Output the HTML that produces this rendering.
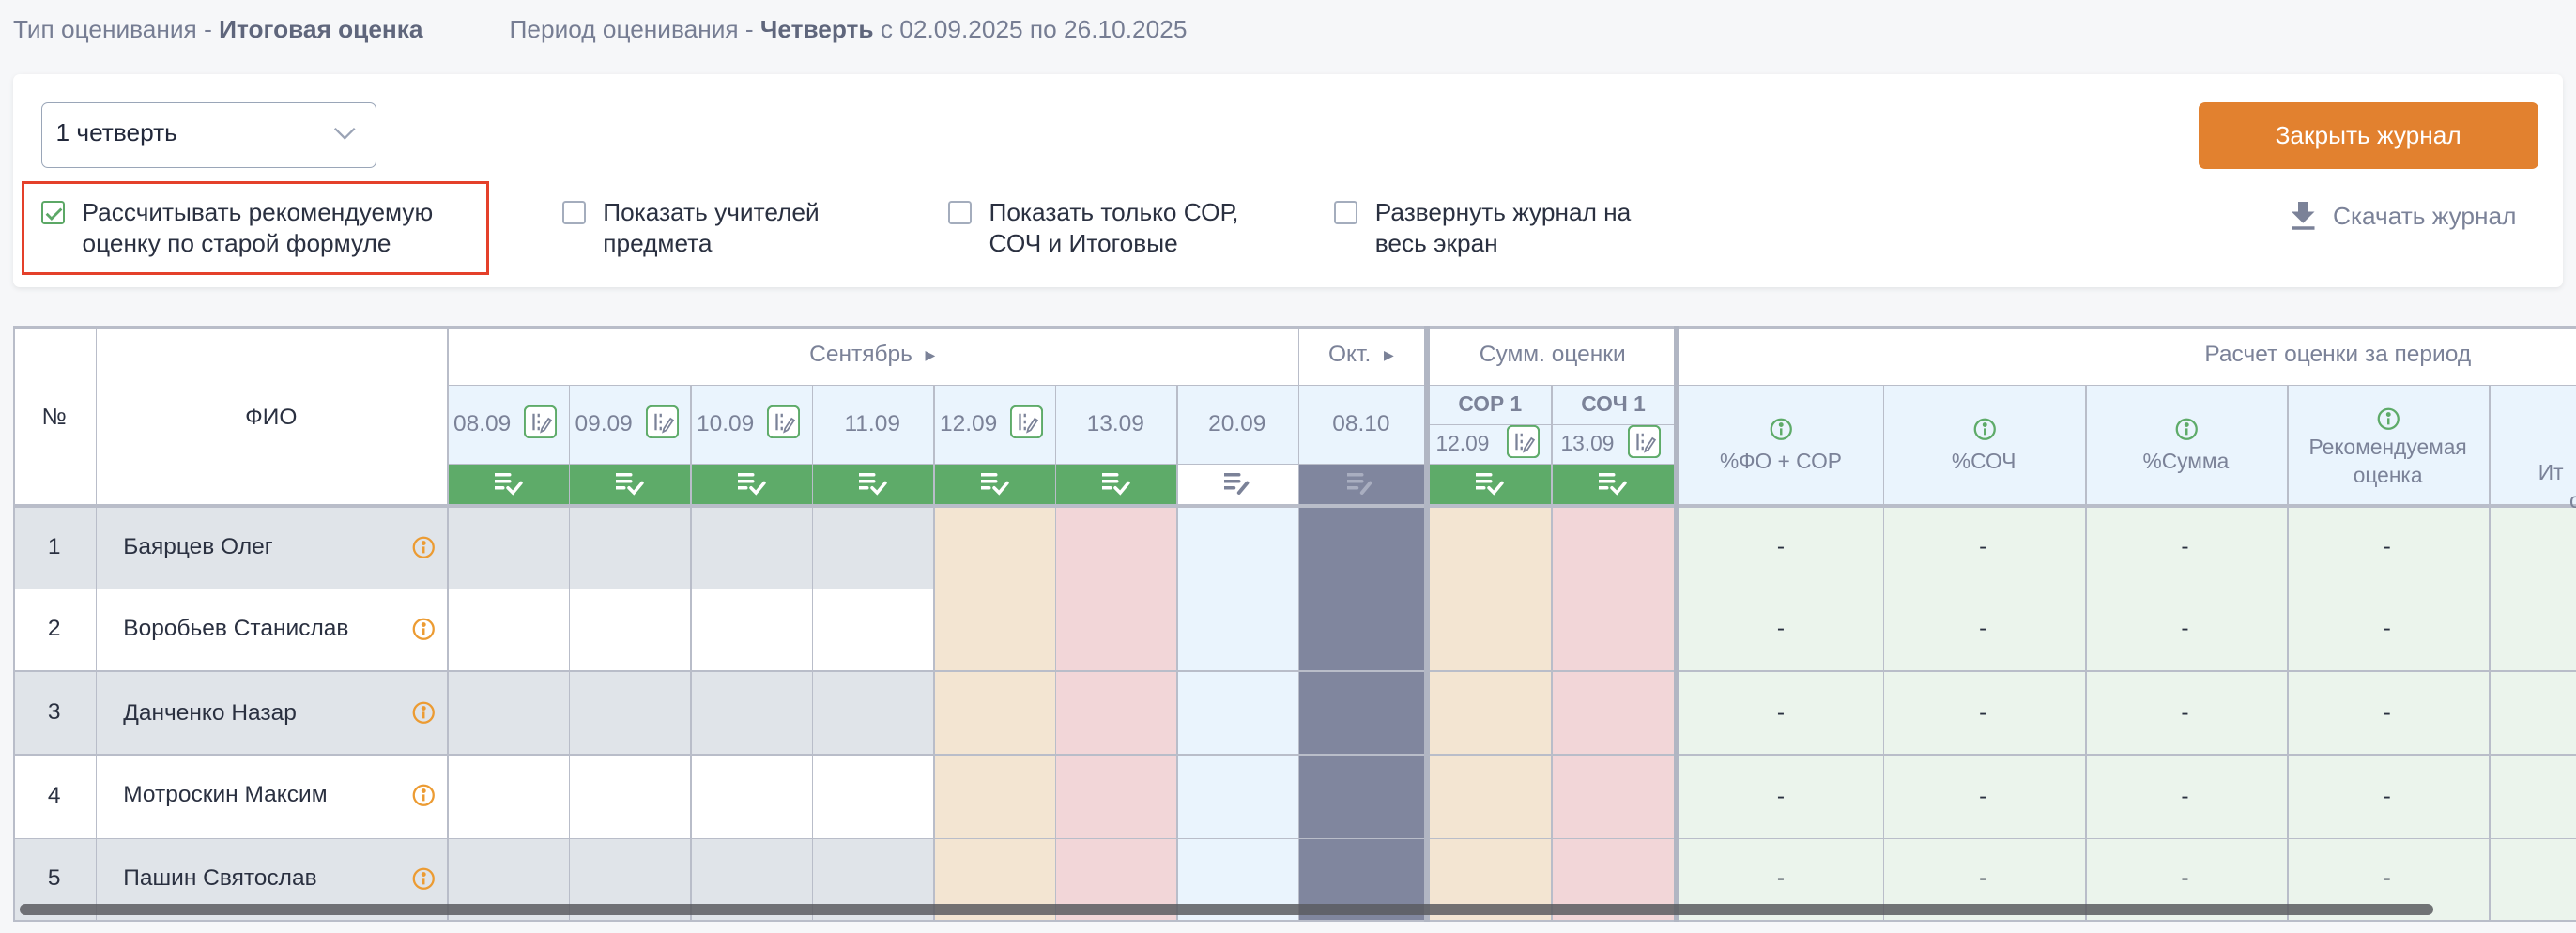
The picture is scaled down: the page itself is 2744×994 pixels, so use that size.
<!DOCTYPE html>
<html><head><meta charset="utf-8"><style>
html,body{margin:0;padding:0;background:#f6f7f9;overflow:hidden}
#w{position:relative;width:1568px;height:568px;zoom:1.75;font-family:"Liberation Sans",sans-serif;color:#2a3040}
.a{position:absolute}
.t{position:absolute;display:flex;align-items:center;justify-content:center;text-align:center}
.vl{position:absolute;width:1px;background:#b9bdc9}
.hl{position:absolute;height:1px;background:#b9bdc9}
.g{color:#7b8298}
.cb{position:absolute;width:12px;height:12px;border:1.5px solid #a4adbd;border-radius:2px;background:#fff}
.lab{position:absolute;font-size:15px;line-height:19px;color:#2a3040}
.ic{position:absolute}
.d{position:absolute;font-size:14px;width:20px;text-align:center}
</style></head><body><div id="w">
<div class="a" style="left:8px;top:9px;font-size:15px;color:#767d93">Тип оценивания - <b style="color:#5f667c">Итоговая оценка</b></div>
<div class="a" style="left:310px;top:9px;font-size:15px;color:#767d93">Период оценивания - <b style="color:#5f667c">Четверть</b> с 02.09.2025 по 26.10.2025</div>

<div class="a" style="left:8px;top:45px;width:1552px;height:130px;background:#fff;border-radius:4px;box-shadow:0 1px 3px rgba(0,0,0,.08)"></div>
<div class="a" style="left:25px;top:62px;width:203px;height:39px;border:1px solid #9aa6b8;border-radius:4px;background:#fff"></div>
<div class="a" style="left:34px;top:72px;font-size:15px;color:#22283a">1 четверть</div>
<svg class="ic" style="left:203px;top:77px" width="14" height="9"><path d="M1 1l6 6 6-6" stroke="#9aa3b5" stroke-width="1.3" fill="none"/></svg>
<div class="t" style="left:1338px;top:62px;width:207px;height:41px;background:#e2812f;border-radius:4px;color:#fff;font-size:15px">Закрыть журнал</div>
<svg class="ic" style="left:1395px;top:123px" width="14" height="17"><path d="M4 0h6v6h4l-7 7-7-7h4z" fill="#7b8298"/><rect x="0" y="15" width="14" height="2" fill="#7b8298"/></svg>
<div class="a" style="left:1420px;top:123px;font-size:15px;color:#7b8298">Скачать журнал</div>

<div class="a" style="left:13px;top:110px;width:281px;height:54px;border:2px solid #e4402a"></div>
<div class="cb" style="left:25px;top:122px;border-color:#5ca866"></div>
<svg class="ic" style="left:27px;top:125px" width="12" height="10"><path d="M1.5 5l3 3 6-6" stroke="#5ca866" stroke-width="1.6" fill="none"/></svg>
<div class="lab" style="left:50px;top:120px">Рассчитывать рекомендуемую<br>оценку по старой формуле</div>
<div class="cb" style="left:342px;top:122px"></div>
<div class="lab" style="left:367px;top:120px">Показать учителей<br>предмета</div>
<div class="cb" style="left:577px;top:122px"></div>
<div class="lab" style="left:602px;top:120px">Показать только СОР,<br>СОЧ и Итоговые</div>
<div class="cb" style="left:812px;top:122px"></div>
<div class="lab" style="left:837px;top:120px">Развернуть журнал на<br>весь экран</div>

<div class="a" style="left:8px;top:198px;width:1560px;height:362px;background:#fff"></div>
<div class="a" style="left:272px;top:234px;width:598px;height:48px;background:#eaf4fd"></div>
<div class="a" style="left:870px;top:234px;width:150px;height:48px;background:#eaf4fd"></div>
<div class="a" style="left:1022px;top:234px;width:546px;height:74px;background:#eaf4fd"></div>
<div class="a" style="left:272px;top:282px;width:444px;height:26px;background:#5eab69"></div>
<div class="a" style="left:790px;top:282px;width:77px;height:26px;background:#80869e"></div>
<div class="a" style="left:870px;top:282px;width:150px;height:26px;background:#5eab69"></div>
<div class="a" style="left:8px;top:308px;width:1560px;height:50px;background:#e0e4e9"></div>
<div class="a" style="left:8px;top:408px;width:1560px;height:51px;background:#e0e4e9"></div>
<div class="a" style="left:8px;top:510px;width:1560px;height:50px;background:#e0e4e9"></div>
<div class="a" style="left:568px;top:308px;width:74px;height:252px;background:#f3e5d2"></div>
<div class="a" style="left:642px;top:308px;width:74px;height:252px;background:#f2d6d8"></div>
<div class="a" style="left:716px;top:308px;width:74px;height:252px;background:#eaf4fd"></div>
<div class="a" style="left:790px;top:308px;width:77px;height:252px;background:#80869e"></div>
<div class="a" style="left:870px;top:308px;width:74px;height:252px;background:#f3e5d2"></div>
<div class="a" style="left:944px;top:308px;width:76px;height:252px;background:#f2d6d8"></div>
<div class="a" style="left:1022px;top:308px;width:546px;height:252px;background:#ebf4ec"></div>

<div class="hl" style="left:8px;top:198px;width:1560px;height:2px"></div>
<div class="hl" style="left:272px;top:234px;width:1296px"></div>
<div class="hl" style="left:870px;top:258px;width:150px"></div>
<div class="hl" style="left:272px;top:282px;width:748px"></div>
<div class="hl" style="left:8px;top:307px;width:1560px;height:2px"></div>
<div class="hl" style="left:8px;top:358px;width:1560px"></div>
<div class="hl" style="left:8px;top:408px;width:1560px"></div>
<div class="hl" style="left:8px;top:459px;width:1560px"></div>
<div class="hl" style="left:8px;top:510px;width:1560px"></div>
<div class="hl" style="left:8px;top:560px;width:1560px"></div>
<div class="vl" style="left:8px;top:198px;height:363px"></div>
<div class="vl" style="left:58px;top:198px;height:363px"></div>
<div class="vl" style="left:272px;top:198px;height:363px"></div>
<div class="vl" style="left:346px;top:234px;height:327px"></div>
<div class="vl" style="left:420px;top:234px;height:327px"></div>
<div class="vl" style="left:494px;top:234px;height:327px"></div>
<div class="vl" style="left:568px;top:234px;height:327px"></div>
<div class="vl" style="left:642px;top:234px;height:327px"></div>
<div class="vl" style="left:716px;top:234px;height:327px"></div>
<div class="vl" style="left:790px;top:198px;height:363px"></div>
<div class="vl" style="left:867px;top:198px;height:363px;width:3px;background:#b1b6c3"></div>
<div class="vl" style="left:944px;top:234px;height:327px"></div>
<div class="vl" style="left:1019px;top:198px;height:363px;width:3px;background:#b1b6c3"></div>
<div class="vl" style="left:1146px;top:234px;height:327px"></div>
<div class="vl" style="left:1269px;top:234px;height:327px"></div>
<div class="vl" style="left:1392px;top:234px;height:327px"></div>
<div class="vl" style="left:1515px;top:234px;height:327px"></div>

<div class="t" style="left:8px;top:234px;width:50px;height:40px;font-size:14px">№</div>
<div class="t" style="left:58px;top:234px;width:214px;height:40px;font-size:14px">ФИО</div>
<div class="t g" style="left:272px;top:198px;width:518px;height:36px;font-size:14px">Сентябрь &nbsp;<span style="font-size:8px">▶</span></div>
<div class="t g" style="left:790px;top:198px;width:77px;height:36px;font-size:14px">Окт. &nbsp;<span style="font-size:8px">▶</span></div>
<div class="t g" style="left:870px;top:198px;width:150px;height:36px;font-size:14px">Сумм. оценки</div>
<div class="t g" style="left:1022px;top:198px;width:802px;height:36px;font-size:14px">Расчет оценки за период</div>

<div class="a g" style="left:276px;top:250px;font-size:14px">08.09</div>
<div class="a g" style="left:350px;top:250px;font-size:14px">09.09</div>
<div class="a g" style="left:424px;top:250px;font-size:14px">10.09</div>
<div class="t g" style="left:494px;top:234px;width:74px;height:48px;font-size:14px">11.09</div>
<div class="a g" style="left:572px;top:250px;font-size:14px">12.09</div>
<div class="t g" style="left:642px;top:234px;width:74px;height:48px;font-size:14px">13.09</div>
<div class="t g" style="left:716px;top:234px;width:74px;height:48px;font-size:14px">20.09</div>
<div class="t g" style="left:790px;top:234px;width:77px;height:48px;font-size:14px">08.10</div>
<div class="t g" style="left:870px;top:234px;width:74px;height:24px;font-size:13px;font-weight:bold">СОР 1</div>
<div class="t g" style="left:944px;top:234px;width:76px;height:24px;font-size:13px;font-weight:bold">СОЧ 1</div>
<div class="a g" style="left:874px;top:262px;font-size:13px">12.09</div>
<div class="a g" style="left:950px;top:262px;font-size:13px">13.09</div>

<svg width="0" height="0" style="position:absolute"><defs>
<g id="db"><rect x="0.5" y="0.5" width="19" height="19" rx="3" fill="#fff" stroke="#5eab69" stroke-width="1.2"/><path d="M6 5v10M9 5v2M9 9v2M9 13v2" stroke="#7b8298" stroke-width="1.3"/><path d="M11 14l4-6 1.5 1-4 6-2 1z" stroke="#7b8298" stroke-width="1" fill="none"/></g>
<g id="ok"><path d="M0 1h9M0 5h9M0 9h5" stroke="#fff" stroke-width="2" stroke-linecap="round"/><path d="M8 9l3 3 5-6" stroke="#fff" stroke-width="2" fill="none" stroke-linecap="round"/></g>
<g id="ed"><path d="M0 1h9M0 5h9M0 9h6" stroke-width="2" stroke-linecap="round"/><path d="M9 12l5-6" stroke-width="2.2" stroke-linecap="round"/></g>
<g id="inf"><circle cx="7" cy="7" r="6" fill="none" stroke-width="1.3"/><circle cx="7" cy="4.3" r="0.9"/><path d="M7 6.5v4" stroke-width="1.4"/></g>
</defs></svg>
<svg class="ic" style="left:319px;top:247px" width="20" height="20"><use href="#db"/></svg>
<svg class="ic" style="left:393px;top:247px" width="20" height="20"><use href="#db"/></svg>
<svg class="ic" style="left:467px;top:247px" width="20" height="20"><use href="#db"/></svg>
<svg class="ic" style="left:615px;top:247px" width="20" height="20"><use href="#db"/></svg>
<svg class="ic" style="left:917px;top:259px" width="20" height="20"><use href="#db"/></svg>
<svg class="ic" style="left:991px;top:259px" width="20" height="20"><use href="#db"/></svg>

<svg class="ic" style="left:301px;top:288px" width="18" height="14"><use href="#ok"/></svg>
<svg class="ic" style="left:375px;top:288px" width="18" height="14"><use href="#ok"/></svg>
<svg class="ic" style="left:449px;top:288px" width="18" height="14"><use href="#ok"/></svg>
<svg class="ic" style="left:523px;top:288px" width="18" height="14"><use href="#ok"/></svg>
<svg class="ic" style="left:597px;top:288px" width="18" height="14"><use href="#ok"/></svg>
<svg class="ic" style="left:671px;top:288px" width="18" height="14"><use href="#ok"/></svg>
<svg class="ic" style="left:898px;top:288px" width="18" height="14"><use href="#ok"/></svg>
<svg class="ic" style="left:973px;top:288px" width="18" height="14"><use href="#ok"/></svg>
<svg class="ic" style="left:745px;top:288px;stroke:#7b8298" width="18" height="14"><use href="#ed"/></svg>
<svg class="ic" style="left:820px;top:288px;stroke:#a9aec0" width="18" height="14"><use href="#ed"/></svg>

<svg class="ic" style="left:1077px;top:254px;stroke:#5eab69;fill:#5eab69" width="14" height="14"><use href="#inf"/></svg>
<svg class="ic" style="left:1201px;top:254px;stroke:#5eab69;fill:#5eab69" width="14" height="14"><use href="#inf"/></svg>
<svg class="ic" style="left:1324px;top:254px;stroke:#5eab69;fill:#5eab69" width="14" height="14"><use href="#inf"/></svg>
<svg class="ic" style="left:1447px;top:248px;stroke:#5eab69;fill:#5eab69" width="14" height="14"><use href="#inf"/></svg>
<div class="t g" style="left:1022px;top:272px;width:124px;height:18px;font-size:13px">%ФО + СОР</div>
<div class="t g" style="left:1146px;top:272px;width:123px;height:18px;font-size:13px">%СОЧ</div>
<div class="t g" style="left:1269px;top:272px;width:123px;height:18px;font-size:13px">%Сумма</div>
<div class="t g" style="left:1392px;top:264px;width:123px;height:34px;font-size:13px;line-height:17px">Рекомендуемая<br>оценка</div>
<div class="a g" style="left:1545px;top:280px;font-size:13px">Ит</div>
<div class="a g" style="left:1564px;top:297px;font-size:13px">о</div>

<div class="t" style="left:8px;top:308px;width:50px;height:50px;font-size:14px">1</div>
<div class="t" style="left:8px;top:358px;width:50px;height:50px;font-size:14px">2</div>
<div class="t" style="left:8px;top:408px;width:50px;height:51px;font-size:14px">3</div>
<div class="t" style="left:8px;top:459px;width:50px;height:51px;font-size:14px">4</div>
<div class="t" style="left:8px;top:510px;width:50px;height:50px;font-size:14px">5</div>
<div class="a" style="left:75px;top:325px;font-size:14px">Баярцев Олег</div>
<div class="a" style="left:75px;top:375px;font-size:14px">Воробьев Станислав</div>
<div class="a" style="left:75px;top:426px;font-size:14px">Данченко Назар</div>
<div class="a" style="left:75px;top:476px;font-size:14px">Мотроскин Максим</div>
<div class="a" style="left:75px;top:527px;font-size:14px">Пашин Святослав</div>
<svg class="ic" style="left:251px;top:326px;stroke:#ec9b32;fill:#ec9b32" width="14" height="14"><use href="#inf"/></svg>
<svg class="ic" style="left:251px;top:376px;stroke:#ec9b32;fill:#ec9b32" width="14" height="14"><use href="#inf"/></svg>
<svg class="ic" style="left:251px;top:427px;stroke:#ec9b32;fill:#ec9b32" width="14" height="14"><use href="#inf"/></svg>
<svg class="ic" style="left:251px;top:477px;stroke:#ec9b32;fill:#ec9b32" width="14" height="14"><use href="#inf"/></svg>
<svg class="ic" style="left:251px;top:528px;stroke:#ec9b32;fill:#ec9b32" width="14" height="14"><use href="#inf"/></svg>

<div class="d" style="left:1074px;top:325px">-</div><div class="d" style="left:1197px;top:325px">-</div><div class="d" style="left:1320px;top:325px">-</div><div class="d" style="left:1443px;top:325px">-</div>
<div class="d" style="left:1074px;top:375px">-</div><div class="d" style="left:1197px;top:375px">-</div><div class="d" style="left:1320px;top:375px">-</div><div class="d" style="left:1443px;top:375px">-</div>
<div class="d" style="left:1074px;top:426px">-</div><div class="d" style="left:1197px;top:426px">-</div><div class="d" style="left:1320px;top:426px">-</div><div class="d" style="left:1443px;top:426px">-</div>
<div class="d" style="left:1074px;top:477px">-</div><div class="d" style="left:1197px;top:477px">-</div><div class="d" style="left:1320px;top:477px">-</div><div class="d" style="left:1443px;top:477px">-</div>
<div class="d" style="left:1074px;top:527px">-</div><div class="d" style="left:1197px;top:527px">-</div><div class="d" style="left:1320px;top:527px">-</div><div class="d" style="left:1443px;top:527px">-</div>

<div class="a" style="left:12px;top:550px;width:1469px;height:7px;border-radius:4px;background:rgba(90,92,96,.85)"></div>
</div></body></html>
